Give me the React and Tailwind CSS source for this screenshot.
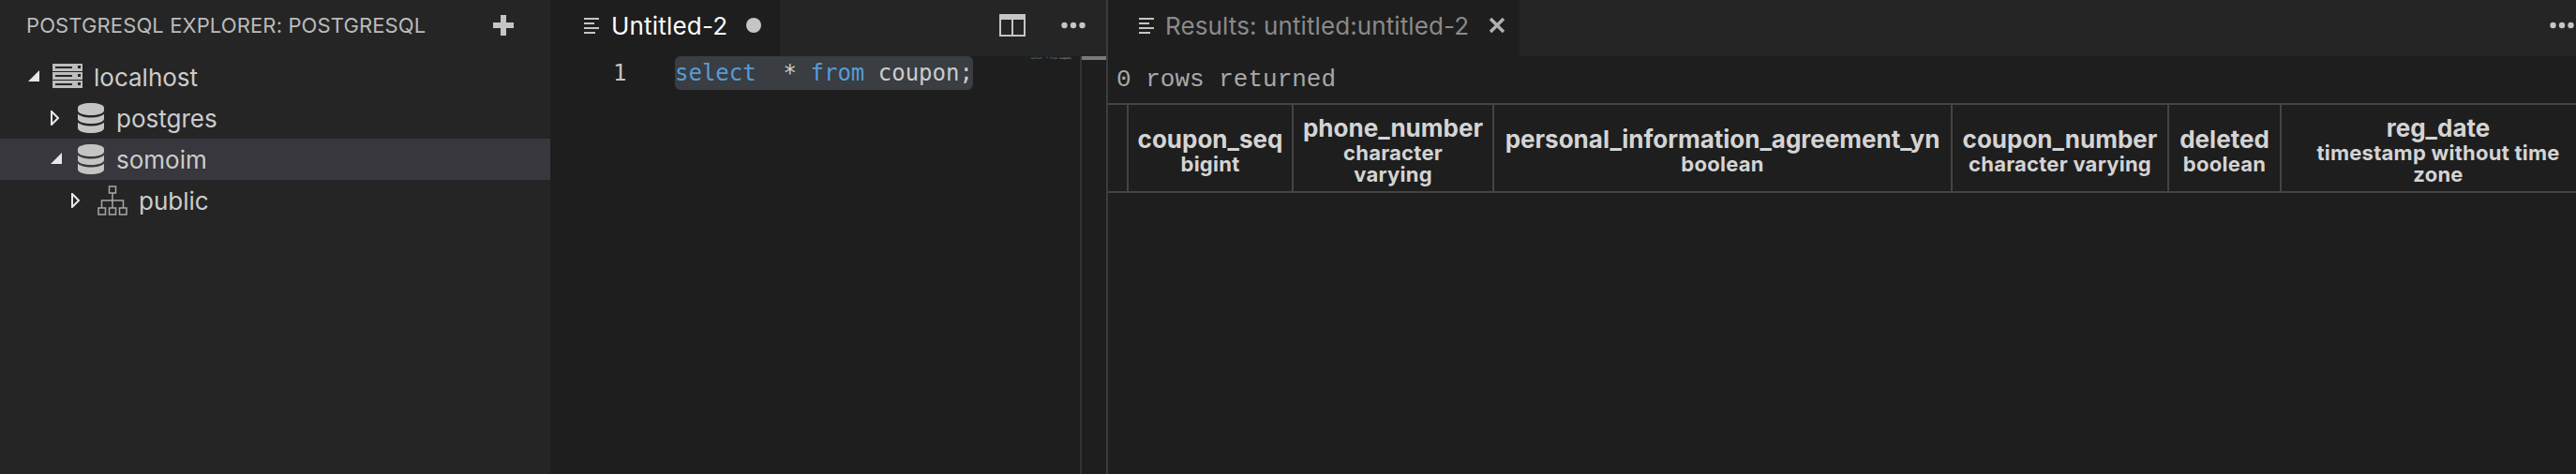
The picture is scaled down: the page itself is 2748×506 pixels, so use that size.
import React from 'react';

const ui = "font-['Inter','Noto_Sans',sans-serif]";

function TabLines({ color }) {
  return (
    <svg width="20" height="20" viewBox="0 0 20 20" className="shrink-0">
      <rect x="1" y="2" width="16" height="2" fill={color} />
      <rect x="1" y="7" width="11" height="2" fill={color} />
      <rect x="1" y="12" width="16" height="2" fill={color} />
      <rect x="1" y="17" width="12" height="2" fill={color} />
    </svg>
  );
}

function Dots() {
  return (
    <svg width="26" height="8" viewBox="0 0 26 8" className="shrink-0">
      <circle cx="3.5" cy="4" r="3.2" fill="#c5c5c5" />
      <circle cx="13" cy="4" r="3.2" fill="#c5c5c5" />
      <circle cx="22.5" cy="4" r="3.2" fill="#c5c5c5" />
    </svg>
  );
}

function TwistOpen() {
  return (
    <svg width="12" height="12" viewBox="0 0 12 12" className="mb-[3px] shrink-0">
      <path d="M12 0V12H0Z" fill="#e8e8e8" />
    </svg>
  );
}

function TwistClosed() {
  return (
    <svg width="9" height="16" viewBox="0 0 9 16" className="shrink-0">
      <path d="M1 1L8 8L1 15Z" fill="none" stroke="#e8e8e8" strokeWidth="2" />
    </svg>
  );
}

function ServerIcon() {
  return (
    <svg width="32" height="26" viewBox="0 0 32 26" className="mb-[3px] shrink-0">
      {[0, 9, 18].map((y) => (
        <g key={y}>
          <rect x="0" y={y} width="32" height="8" fill="#bdbdbd" />
          <rect x="3" y={y + 3} width="18" height="2" fill="#252526" />
          <rect x="27" y={y + 2} width="3" height="3" fill="#252526" />
        </g>
      ))}
    </svg>
  );
}

function DbIcon() {
  return (
    <svg width="28" height="32" viewBox="0 0 28 32" className="ml-[3px] shrink-0" fill="#c4c4c4">
      <path d="M0 5C0 2 6 0 14 0S28 2 28 5V8C28 11 21 13 14 13S0 11 0 8Z" />
      <path d="M0 11.5C2 14 8 15.5 14 15.5S26 14 28 11.5V17C28 20 21 22 14 22S0 20 0 17Z" />
      <path d="M0 20.5C2 23 8 24.5 14 24.5S26 23 28 20.5V27C28 30 21 32 14 32S0 30 0 27Z" />
    </svg>
  );
}

function SchemaIcon() {
  return (
    <svg width="32" height="32" viewBox="0 0 32 32" className="ml-[2px] shrink-0" fill="none" stroke="#a8a8a8" strokeWidth="1.5">
      <rect x="12.5" y="1" width="7" height="7" />
      <path d="M16 8V24M4.5 24V16H27.5V24" />
      <rect x="1" y="24" width="7.5" height="7" />
      <rect x="12.5" y="24" width="7" height="7" />
      <rect x="23.5" y="24" width="7.5" height="7" />
    </svg>
  );
}

function TreeRow({ indent, twist, icon, label, active, iconWidth }) {
  return (
    <div className={`flex h-[44px] items-center ${active ? 'bg-[#37373d]' : ''}`} style={{ paddingLeft: indent }}>
      <div className="flex w-[26px] items-center">{twist}</div>
      <div className={`flex ${iconWidth || 'w-[44px]'} items-center`}>{icon}</div>
      <span className="text-[26px] text-[#cccccc]">{label}</span>
    </div>
  );
}

const columns = [
  { name: '', type: '', width: 'w-[20px]', typeWidth: '' },
  { name: 'coupon_seq', type: 'bigint', width: 'w-[176px]', typeWidth: '' },
  { name: 'phone_number', type: 'character varying', width: 'w-[214px]', typeWidth: 'max-w-[150px]' },
  { name: 'personal_information_agreement_yn', type: 'boolean', width: 'w-[489px]', typeWidth: '' },
  { name: 'coupon_number', type: 'character varying', width: 'w-[231px]', typeWidth: '' },
  { name: 'deleted', type: 'boolean', width: 'w-[120px]', typeWidth: '' },
  { name: 'reg_date', type: 'timestamp without time zone', width: 'w-[336px]', typeWidth: 'max-w-[280px]' },
];

export default function App() {
  return (
    <div className={`flex h-[506px] w-[2748px] overflow-hidden bg-[#1e1e1e] ${ui}`}>
      <aside className="w-[587px] shrink-0 bg-[#252526]">
        <div className="flex h-[60px] items-center justify-between pb-[6px] pl-[28px] pr-[39px]">
          <span className="text-[22px] tracking-[0.12px] text-[#bbbbbb]">POSTGRESQL EXPLORER: POSTGRESQL</span>
          <svg width="22" height="22" viewBox="0 0 22 22">
            <path d="M8 0H14V8H22V14H14V22H8V14H0V8H8Z" fill="#c5c5c5" />
          </svg>
        </div>
        <TreeRow indent={30} twist={<TwistOpen />} icon={<ServerIcon />} label="localhost" />
        <TreeRow indent={54} twist={<TwistClosed />} icon={<DbIcon />} label="postgres" />
        <TreeRow indent={54} twist={<TwistOpen />} icon={<DbIcon />} label="somoim" active />
        <TreeRow indent={76} twist={<TwistClosed />} icon={<SchemaIcon />} label="public" iconWidth="w-[46px]" />
      </aside>

      <section className="flex w-[595px] shrink-0 flex-col border-r-2 border-[#3c3c3c]">
        <div className="flex h-[60px] items-center bg-[#252526]">
          <div className="flex h-full w-[245px] items-center bg-[#1e1e1e] pb-[6px] pl-[35px]">
            <TabLines color="#c5c5c5" />
            <span className="ml-[10px] text-[26px] tracking-[0.2px] text-white">Untitled-2</span>
            <span className="ml-[20px] h-[16px] w-[16px] rounded-full bg-[#c5c5c5]" />
          </div>
          <svg width="28" height="24" viewBox="0 0 28 24" className="mb-[6px] ml-[234px]">
            <path d="M0 0H28V24H0ZM2 6V22H13V6ZM15 6V22H26V6Z" fill="#c5c5c5" fillRule="evenodd" />
          </svg>
          <div className="mb-[6px] ml-[38px]"><Dots /></div>
        </div>
        <div className="relative flex-1">
          <div className="flex h-[36px] font-['DejaVu_Sans_Mono',monospace] text-[24px] leading-[36px]">
            <span className="ml-[67px] w-[66px] text-[#c5c5c5]">1</span>
            <span className="whitespace-pre rounded-[6px] bg-[#3a3d41] text-[#cccccc]">
              <span className="text-[#569cd6]">select</span>  * <span className="text-[#569cd6]">from</span> coupon;
            </span>
          </div>
          <div className="absolute bottom-0 left-[565px] top-0 w-[28px] border-l-2 border-[#333333]">
            <div className="h-[4px] bg-[#7a7a7a]" />
          </div>
          <div className="absolute left-[513px] top-0 whitespace-pre font-['DejaVu_Sans_Mono',monospace] text-[3.3px] leading-[5px] text-[#bbbbbb]">
            <span className="text-[#569cd6]">select</span>  * <span className="text-[#569cd6]">from</span> coupon;
          </div>
        </div>
      </section>

      <section className="flex min-w-0 flex-1 flex-col">
        <div className="flex h-[60px] items-center bg-[#252526]">
          <div className="flex h-full w-[439px] items-center bg-[#1e1e1e] pb-[6px] pl-[32px]">
            <TabLines color="#c5c5c5" />
            <span className="ml-[9px] text-[26px] tracking-[0.1px] text-[#8a8a8a]">Results: untitled:untitled-2</span>
            <svg width="18" height="18" viewBox="0 0 18 18" className="ml-[21px]">
              <path d="M2 2L16 16M16 2L2 16" stroke="#b0b0b0" strokeWidth="3.5" />
            </svg>
          </div>
          <div className="mb-[6px] ml-auto mr-[2px]"><Dots /></div>
        </div>
        <div className="flex h-[50px] items-center pl-[9px] font-['Liberation_Mono',monospace] text-[26px] text-[#a8a8a8]">
          0 rows returned
        </div>
        <div className="flex h-[96px] border-y-2 border-[#444444]">
          {columns.map((col, i) => (
            <div
              key={i}
              className={`flex ${col.width} shrink-0 flex-col items-center justify-center px-[10px] pt-[4px] text-center font-bold text-[#d4d4d4] ${i > 0 ? 'border-l-2 border-[#444444]' : ''}`}
            >
              <div className="text-[26px] leading-[30px]">{col.name}</div>
              <div className={`${col.typeWidth} text-[22px] leading-[23px] tracking-[0.25px]`}>{col.type}</div>
            </div>
          ))}
        </div>
      </section>
    </div>
  );
}
